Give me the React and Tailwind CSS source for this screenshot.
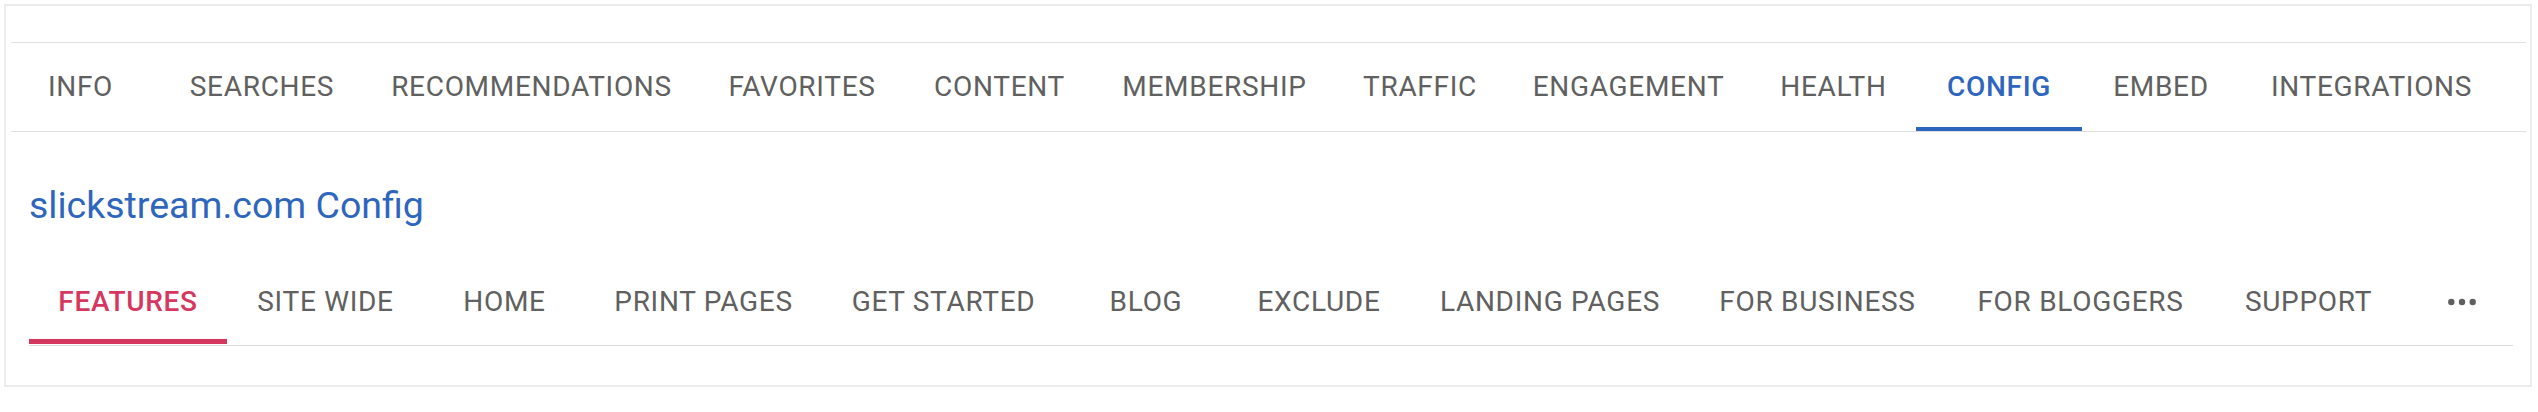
const topTabs = [
  { label: "INFO", w: "w-[161px]" },
  { label: "SEARCHES", w: "w-[202px]" },
  { label: "RECOMMENDATIONS", w: "w-[337px]" },
  { label: "FAVORITES", w: "w-[204px]" },
  { label: "CONTENT", w: "w-[191px]" },
  { label: "MEMBERSHIP", w: "w-[239px]" },
  { label: "TRAFFIC", w: "w-[172px]" },
  { label: "ENGAGEMENT", w: "w-[245px]" },
  { label: "HEALTH", w: "w-[165px]" },
  { label: "CONFIG", w: "w-[166px]", active: true },
  { label: "EMBED", w: "w-[158px]" },
  { label: "INTEGRATIONS", w: "w-[263px]" },
];

const subTabs = [
  { label: "FEATURES", w: "w-[198px]", active: true },
  { label: "SITE WIDE", w: "w-[197px]" },
  { label: "HOME", w: "w-[161px]" },
  { label: "PRINT PAGES", w: "w-[237px]" },
  { label: "GET STARTED", w: "w-[243px]" },
  { label: "BLOG", w: "w-[162px]" },
  { label: "EXCLUDE", w: "w-[184px]" },
  { label: "LANDING PAGES", w: "w-[278px]" },
  { label: "FOR BUSINESS", w: "w-[257px]" },
  { label: "FOR BLOGGERS", w: "w-[269px]" },
  { label: "SUPPORT", w: "w-[187px]" },
];

function Tab({ label, w, active, activeText, activeBar }) {
  return (
    <div
      className={`relative shrink-0 flex items-center justify-center h-full ${w}`}
    >
      <span
        className={`whitespace-nowrap text-[28px] tracking-[0.7px] ${
          active ? `${activeText} font-medium` : "text-[#606060]"
        }`}
      >
        {label}
      </span>
      {active && <div className={`absolute left-0 right-0 ${activeBar}`} />}
    </div>
  );
}

export default function App() {
  return (
    <div className="bg-white w-[2538px] h-[412px] pt-[4px] font-[Roboto,sans-serif]">
      <div className="ml-[4px] w-[2528px] border-2 border-[#ebebeb] bg-white">
        <div className="h-[36px]" />

        {/* main nav */}
        <div className="ml-[5px] mr-[4px] border-t border-b border-[#e0e0e0] overflow-hidden">
          <div className="-ml-[11px] flex h-[88px]">
            {topTabs.map((t) => (
              <Tab
                key={t.label}
                {...t}
                activeText="text-[#2f66bd]"
                activeBar="bg-[#2f66bd] h-[4px] bottom-0"
              />
            ))}
          </div>
        </div>

        <div className="pl-[23px] pr-[17px] pb-[39px]">
          <h2 className="mt-[55px] text-[37.5px] leading-[37px] text-[#2f66bd] whitespace-nowrap">
            slickstream.com Config
          </h2>

          {/* config sub nav */}
          <div className="mt-[34px] flex h-[88px] border-b border-[#dcdcdc]">
            {subTabs.map((t) => (
              <Tab
                key={t.label}
                {...t}
                activeText="text-[#d6375f]"
                activeBar="bg-[#d6375f] h-[5px] bottom-[1px]"
              />
            ))}
            <div className="flex items-center pl-[46px] h-full">
              <svg width="30" height="8" viewBox="0 0 30 8">
                <circle cx="3.3" cy="4" r="3.2" fill="#5f5f5f" />
                <circle cx="14" cy="4" r="3.2" fill="#5f5f5f" />
                <circle cx="24.7" cy="4" r="3.2" fill="#5f5f5f" />
              </svg>
            </div>
          </div>
        </div>
      </div>
    </div>
  );
}
